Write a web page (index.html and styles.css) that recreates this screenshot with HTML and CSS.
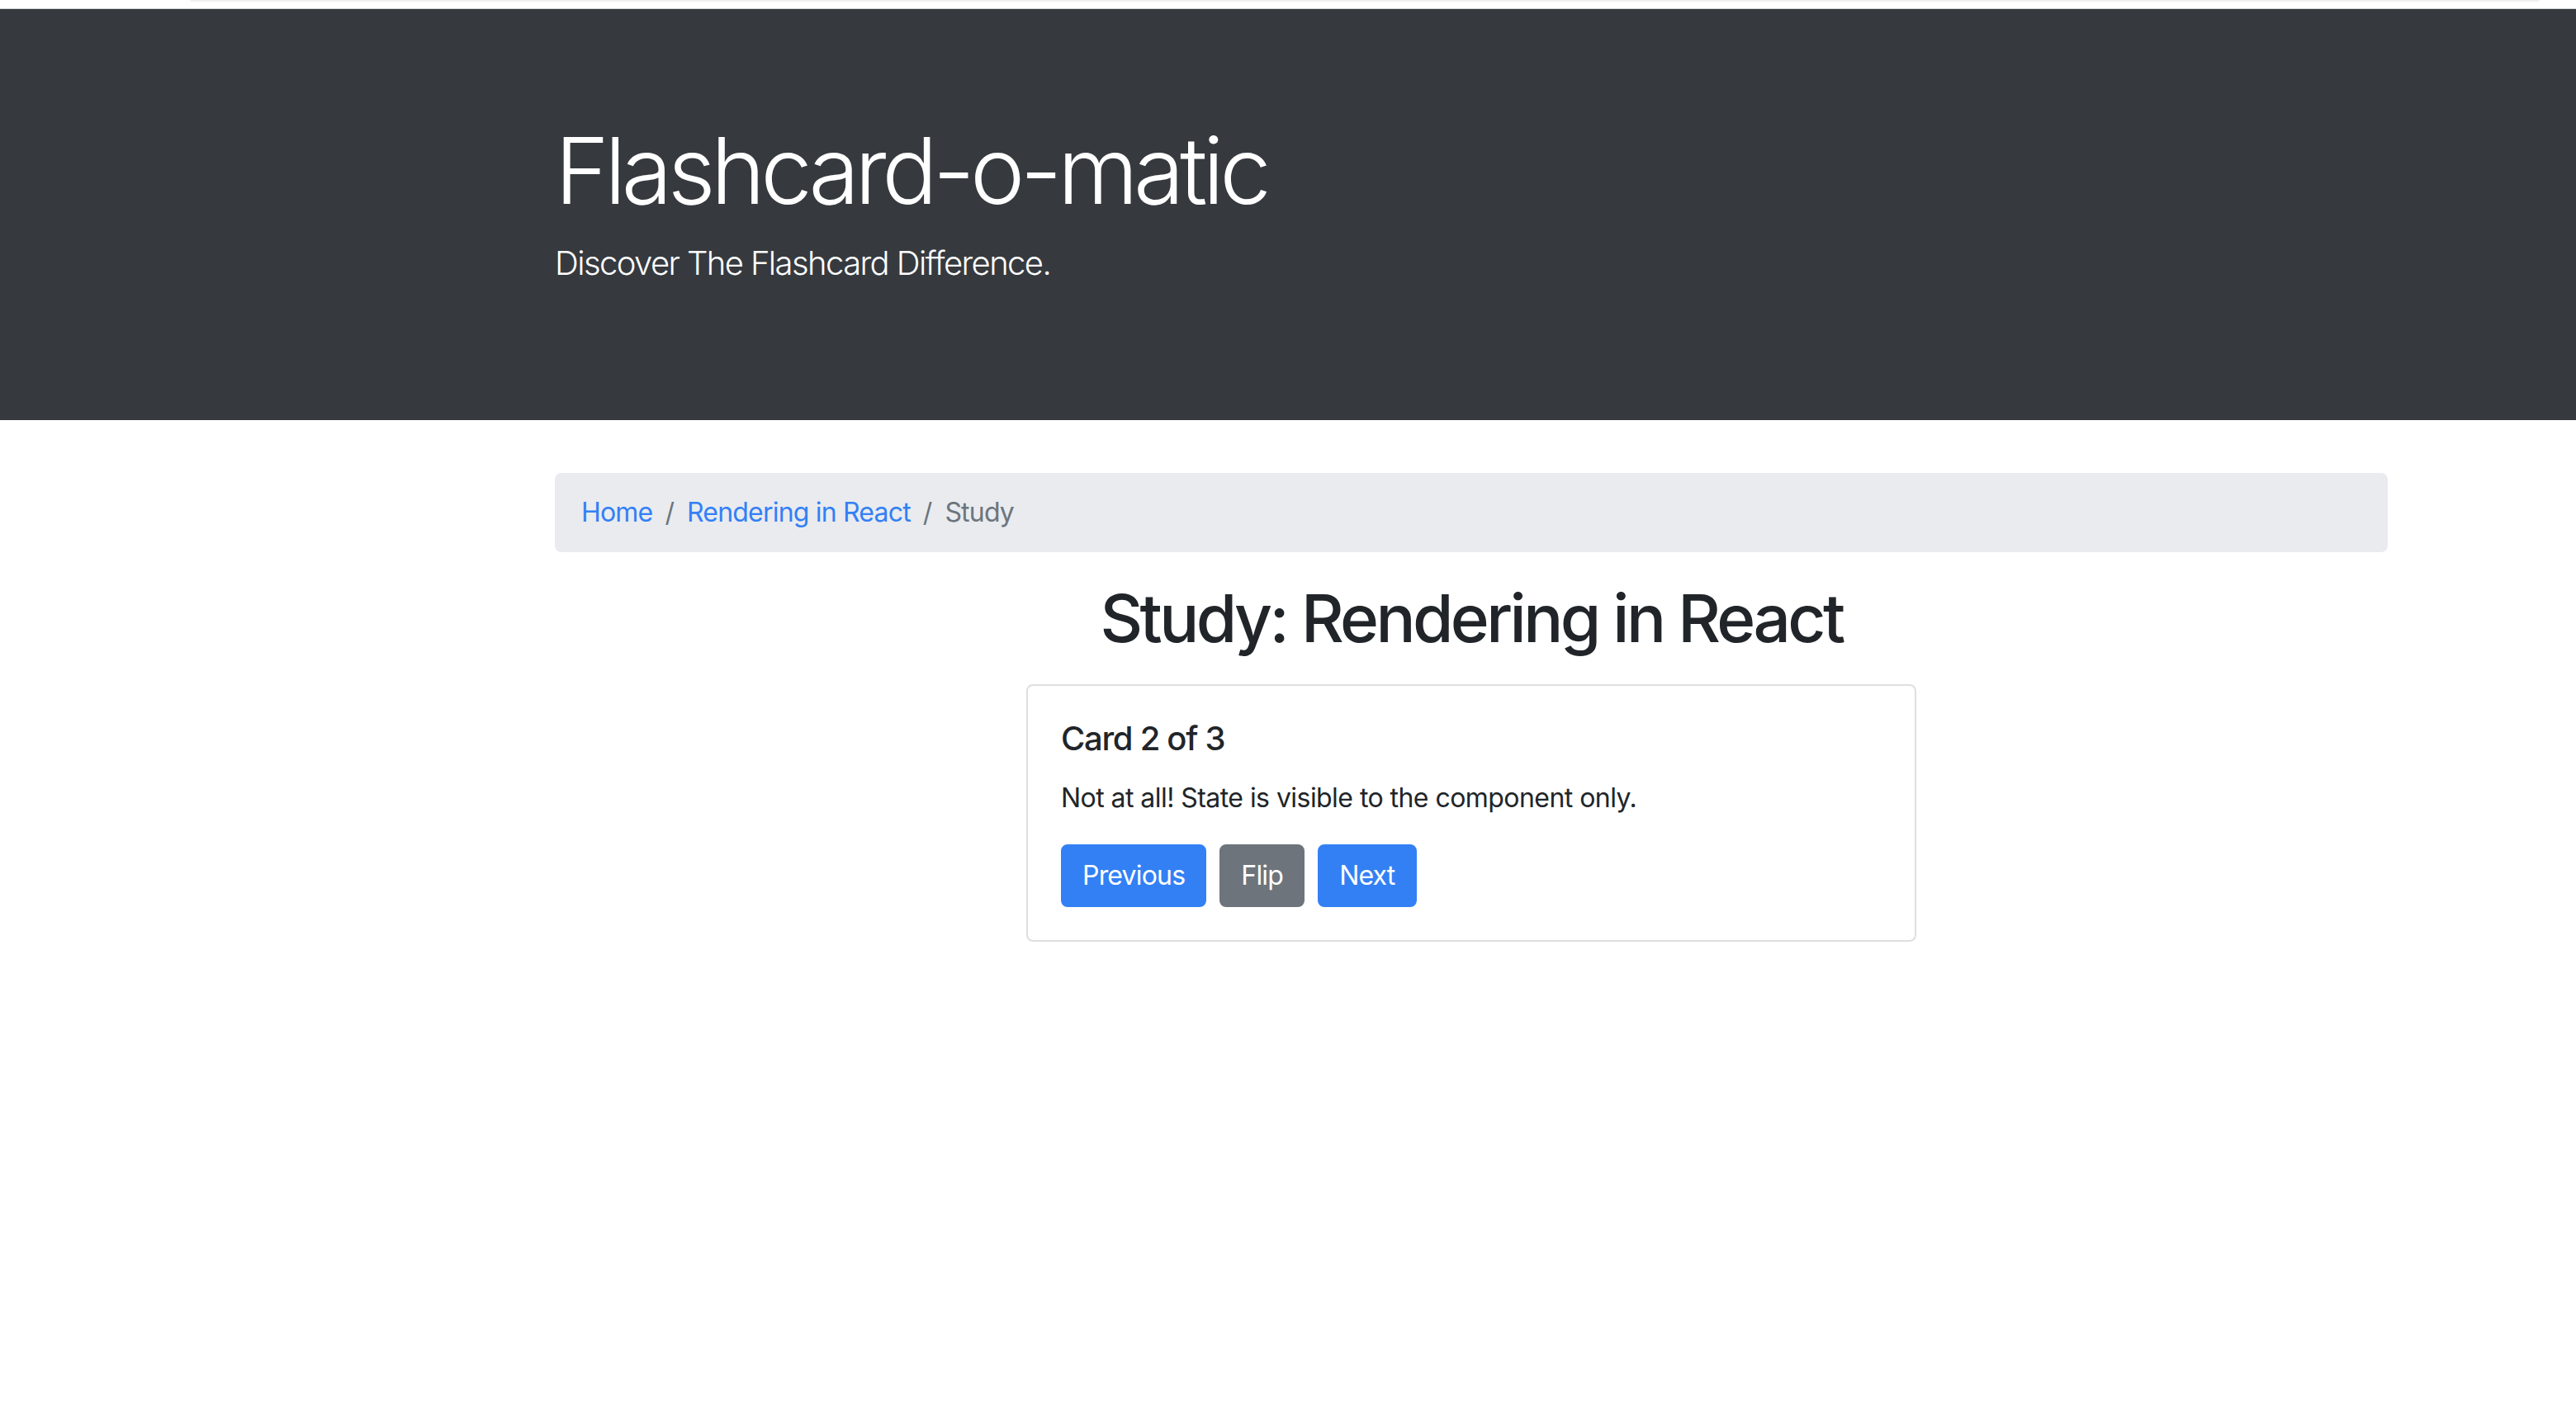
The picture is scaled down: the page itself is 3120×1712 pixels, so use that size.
FILE: index.html
```html
<!DOCTYPE html>
<html lang="en">
<head>
<meta charset="utf-8">
<title>Flashcard-o-matic</title>
<link rel="stylesheet" href="styles.css">
</head>
<body>
<div class="chrome"><div class="chrome-tab"></div></div>
<header class="jumbotron">
  <div class="container">
    <h1 class="display">Flashcard-o-matic</h1>
    <p class="lead">Discover The Flashcard Difference.</p>
  </div>
</header>
<main class="container">
  <nav class="breadcrumb">
    <a class="crumb link" href="#">Home</a>
    <span class="sep">/</span>
    <a class="crumb link" href="#">Rendering in React</a>
    <span class="sep">/</span>
    <span class="crumb active">Study</span>
  </nav>
  <h1 class="page-title">Study: Rendering in React</h1>
  <div class="card">
    <div class="card-body">
      <h5 class="card-title">Card 2 of 3</h5>
      <p class="card-text">Not at all! State is visible to the component only.</p>
      <div class="actions">
        <button class="btn btn-primary">Previous</button>
        <button class="btn btn-secondary">Flip</button>
        <button class="btn btn-primary">Next</button>
      </div>
    </div>
  </div>
</main>
</body>
</html>
```
FILE: styles.css
```css
* { box-sizing: border-box; }
html, body { margin: 0; padding: 0; background: #fff; }
body {
  font-family: Inter, "Noto Sans", "Liberation Sans", sans-serif;
  color: #212529;
  font-size: 32px;
  line-height: 1.5;
}
.chrome {
  height: 11px;
  background: #fff;
  border-bottom: 1px solid #d6d6d6;
}
.chrome-tab {
  height: 2px;
  margin: 0 44px 0 230px;
  background: #f0f0f0;
  border-radius: 0 0 10px 10px;
}
.container {
  width: 2220px;
  margin-left: 672px;
}
.jumbotron {
  background: #363a3f;
  color: #fff;
  padding: 128px 0;
  margin-bottom: 64px;
}
.display {
  margin: 0 0 16px;
  font-size: 112px;
  font-weight: 300;
  line-height: 1.2;
  letter-spacing: -5.6px;
}
.lead {
  margin: 0 0 32px;
  font-size: 40px;
  font-weight: 300;
  line-height: 1.5;
  letter-spacing: -1.6px;
}
.breadcrumb {
  display: flex;
  align-items: center;
  background: #e9ebef;
  border-radius: 8px;
  padding: 24px 32px;
  margin-bottom: 32px;
  height: 96px;
}
.crumb { text-decoration: none; letter-spacing: -0.8px; }
.link { color: #3380f5; }
.active { color: #6c757d; }
.sep { color: #6c757d; padding: 0 15px; }
.page-title {
  text-align: center;
  font-size: 80px;
  font-weight: 500;
  line-height: 1.2;
  margin: 0 0 32px;
  letter-spacing: -3.6px;
}
.card {
  width: 1078px;
  margin: 0 auto;
  border: 2px solid #dfdfdf;
  border-radius: 8px;
}
.card-body { padding: 40px; }
.card-title {
  margin: 0 0 24px;
  font-size: 40px;
  font-weight: 500;
  line-height: 1.2;
  letter-spacing: -1.3px;
}
.card-text { margin: 0 0 32px; letter-spacing: -0.55px; }
.actions { display: flex; gap: 16px; }
.btn {
  font-family: inherit;
  font-size: 32px;
  line-height: 1.5;
  padding: 12px 24px;
  height: 76px;
  border: 2px solid transparent;
  border-radius: 8px;
  color: #fff;
  letter-spacing: -0.8px;
}
.btn-primary { background: #3380f5; border-color: #3380f5; }
.btn-secondary { background: #6d747c; border-color: #6d747c; }
```
